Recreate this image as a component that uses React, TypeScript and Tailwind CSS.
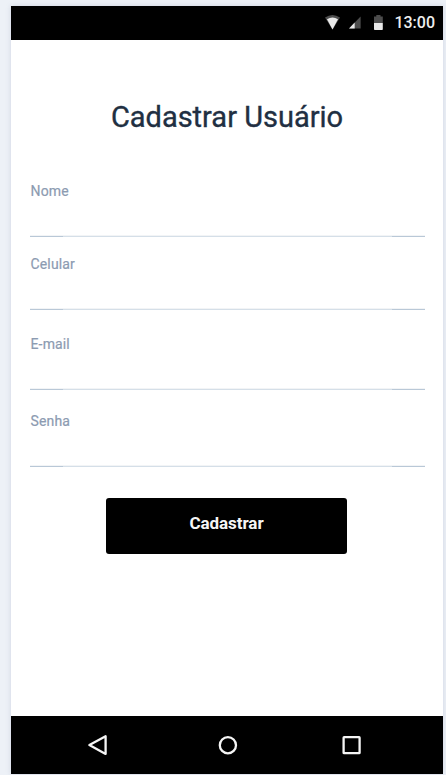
const fields = [
  { label: "Nome", type: "text", gap: "mt-0" },
  { label: "Celular", type: "tel", gap: "mt-[18px]" },
  { label: "E-mail", type: "email", gap: "mt-[25px]" },
  { label: "Senha", type: "password", gap: "mt-[22px]" },
];

function StatusBar() {
  return (
    <header className="flex h-[34px] shrink-0 items-center justify-end bg-black pr-[8px]">
      <svg width="69" height="34" viewBox="0 0 69 34" aria-hidden="true">
        <path d="M0 11.5Q7.5 6.500 15 11.5L7.5 23.5Z" fill="#4d4d4d" />
        <path d="M2 13.2Q7.5 10 13 13.2L7.5 23.5Z" fill="#e8e8e8" />
        <path d="M35.6 10.5V22.500H24Z" fill="#4d4d4d" />
        <path d="M29.7 16.500V22.500H24Z" fill="#e8e8e8" />
        <path d="M49 10.5h2.3V9h4.2v1.5h2.300V17H49Z" fill="#4d4d4d" />
        <path d="M49 17h8.800v6.300q0 .8-.8.8h-7.200q-.8 0-.8-.8Z" fill="#e8e8e8" />
      </svg>
      <span className="text-[16px] leading-[34px] font-medium text-[#eee]">13:00</span>
    </header>
  );
}

function Field({ label, type, gap }: { label: string; type: string; gap: string }) {
  return (
    <label className={`flex h-[55px] flex-col ${gap}`}>
      <span className="pl-[0.5px] text-[14px] leading-[18px] tracking-[0.15px] text-[#8c9bb1] [-webkit-text-stroke:0.2px_#8c9bb1]">{label}</span>
      <input type={type} className="min-h-0 w-full flex-1 bg-transparent outline-none" />
      <span className="h-px bg-[#f2f4f6]" />
      <span className="flex h-px justify-between bg-[#d5dfe8]">
        <span className="w-[33px] bg-[#b9c8d7]" />
        <span className="w-[33px] bg-[#b9c8d7]" />
      </span>
    </label>
  );
}

function NavBar() {
  return (
    <nav className="flex h-[58px] shrink-0 bg-black">
      <svg width="432" height="58" viewBox="0 0 432 58" fill="none" stroke="#f5f5f5" strokeWidth="2.3" strokeLinejoin="round" aria-hidden="true">
        <path d="M94.600 20.300V37.900L78.400 29.100Z" />
        <circle cx="216.900" cy="29.200" r="8.100" />
        <rect x="332.600" y="21.200" width="16" height="16" rx="0.500" />
      </svg>
    </nav>
  );
}

export default function App() {
  return (
    <div className="h-[775px] w-[446px] overflow-hidden bg-[#edf1f7] pt-[6px] pl-[11px] font-['Roboto',sans-serif]">
      <main className="flex h-[768px] w-[432px] flex-col bg-white shadow-[0_0_5px_rgba(130,140,170,0.28)]">
        <StatusBar />
        <h1 className="mt-[58px] text-center text-[29px] leading-[38px] whitespace-nowrap text-[#212f42] [-webkit-text-stroke:0.35px_#212f42]">Cadastrar Usuário</h1>
        <form className="mr-[18px] ml-[19px] mt-[46px] flex flex-col">
          {fields.map((field) => (
            <Field key={field.label} {...field} />
          ))}
          <button type="button" className="mt-[31px] ml-[76px] flex h-[56px] w-[241px] justify-center rounded-[3px] bg-black pt-[13px] text-[17px] leading-[24px] font-bold tracking-[-0.05px] text-[#f5f5f5]">
            Cadastrar
          </button>
        </form>
        <div className="flex-1" />
        <NavBar />
      </main>
    </div>
  );
}
